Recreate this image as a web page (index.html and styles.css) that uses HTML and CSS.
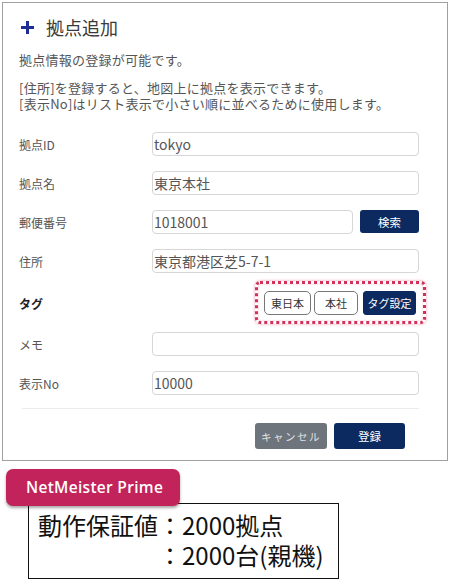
FILE: index.html
```html
<!DOCTYPE html>
<html lang="ja">
<head>
<meta charset="utf-8">
<link rel="stylesheet" href="styles.css">
</head>
<body>
<div class="panel">
  <h1 class="title">
    <svg class="plus" width="13" height="13" viewBox="0 0 13 13"><rect x="5" y="0" width="3" height="13" fill="#1f2e95"/><rect x="0" y="5" width="13" height="3" fill="#1f2e95"/></svg>
    <span>拠点追加</span>
  </h1>
  <p class="desc first">拠点情報の登録が可能です。</p>
  <div class="desc-group">
    <p class="desc">[住所]を登録すると、地図上に拠点を表示できます。</p>
    <p class="desc">[表示No]はリスト表示で小さい順に並べるために使用します。</p>
  </div>

  <div class="form">
    <div class="row">
      <div class="label">拠点ID</div>
      <div class="field"><div class="input">tokyo</div></div>
    </div>
    <div class="row">
      <div class="label">拠点名</div>
      <div class="field"><div class="input">東京本社</div></div>
    </div>
    <div class="row">
      <div class="label">郵便番号</div>
      <div class="field split"><div class="input grow">1018001</div><div class="btn navy search">検索</div></div>
    </div>
    <div class="row">
      <div class="label">住所</div>
      <div class="field"><div class="input">東京都港区芝5-7-1</div></div>
    </div>
    <div class="row tag-row">
      <div class="label strong">タグ</div>
      <div class="field tags-wrap">
        <div class="tags">
          <div class="tag">東日本</div>
          <div class="tag">本社</div>
          <div class="tag set">タグ設定</div>
        </div>
      </div>
    </div>
    <div class="row">
      <div class="label">メモ</div>
      <div class="field"><div class="input"></div></div>
    </div>
    <div class="row">
      <div class="label">表示No</div>
      <div class="field"><div class="input">10000</div></div>
    </div>
  </div>
  <div class="sep"></div>
  <div class="actions">
    <div class="btn cancel">キャンセル</div>
    <div class="btn navy submit">登録</div>
  </div>
</div>

<div class="note">
  <div class="badge">NetMeister Prime</div>
  <div class="box">
    <div class="box-k">動作保証値</div>
    <div class="box-v">
      <div class="box-line">：2000拠点</div>
      <div class="box-line">：2000台(親機)</div>
    </div>
  </div>
</div>
</body>
</html>
```

FILE: styles.css
```css
* { box-sizing: border-box; }
html, body { margin: 0; padding: 0; background: #fff; }
body {
  width: 450px;
  height: 585px;
  overflow: hidden;
  font-family: "Noto Sans CJK JP", "Noto Sans", sans-serif;
  color: #444;
}
.panel {
  margin: 2px 0 0 2px;
  width: 446px;
  height: 459px;
  border: 1px solid #a0a0a0;
  padding: 11px 28px 0 16px;
}
.title {
  margin: 0;
  display: flex;
  align-items: center;
  font-size: 18px;
  font-weight: 400;
  line-height: 26px;
  color: #3a3a3a;
}
.plus { margin: 0 12px 0 2px; }
.desc {
  margin: 0;
  height: 16px;
  font-size: 13px;
  line-height: 16px;
  letter-spacing: 0.25px;
  color: #555;
  white-space: nowrap;
}
.desc.first { margin-top: 12px; margin-bottom: 12px; }
.desc-group { display: flex; flex-direction: column; }
.form {
  margin-top: 20px;
  display: flex;
  flex-direction: column;
  gap: 15px;
}
.row {
  display: flex;
  align-items: center;
  height: 24px;
}
.tag-row { margin: 3px 0 2px; }
.label {
  width: 133px;
  flex: none;
  font-size: 12px;
  color: #555;
}
.label.strong { color: #222; font-weight: 700; }
.field { flex: 1; display: flex; }
.split { gap: 7px; }
.input {
  flex: 1;
  height: 24px;
  border: 1px solid #d6d6d6;
  border-radius: 4px;
  font-size: 14px;
  line-height: 22px;
  padding: 0 1px;
  color: #555;
  background: #fff;
}
.btn {
  display: flex;
  align-items: center;
  justify-content: center;
  border-radius: 3px;
  color: #fff;
  font-size: 11px;
}
.navy { background: #0c2a5f; }
.search { width: 59px; height: 23px; font-size: 11.5px; }
.tags-wrap { justify-content: flex-end; padding-right: 3px; }
.tags {
  position: relative;
  display: flex;
  gap: 3px;
}
.tags::after {
  content: "";
  position: absolute;
  left: -9px;
  right: -10px;
  top: -10px;
  bottom: -9px;
  border: 3px dotted #d2315a;
  border-radius: 5px;
  box-shadow: 0 0 3px rgba(220, 70, 100, 0.55), inset 0 0 2px rgba(220, 70, 100, 0.4);
  pointer-events: none;
}
.tag {
  height: 24px;
  padding: 0 6px;
  display: flex;
  align-items: center;
  justify-content: center;
  border: 1px solid #777;
  border-radius: 5px;
  font-size: 11px;
  color: #333;
  background: #fff;
}
.tag:nth-child(2) { width: 44px; }
.tag.set {
  margin-left: 2px;
  background: #0c2a5f;
  border-color: #0c2a5f;
  color: #fff;
  width: 53px;
  padding: 0;
  border-radius: 3px;
}
.sep {
  margin-top: 13px;
  height: 1px;
  background: #ececec;
  margin-left: 3px;
}
.actions {
  margin-top: 14px;
  display: flex;
  justify-content: flex-end;
  gap: 7px;
  padding-right: 14px;
}
.cancel {
  width: 72px;
  height: 26px;
  background: #6d747b;
  color: #dfe2e5;
  letter-spacing: 1.5px;
  font-size: 10.5px;
}
.submit {
  width: 71px;
  height: 26px;
  font-size: 11.5px;
}
.note {
  padding: 8px 0 0 6px;
}
.badge {
  position: relative;
  z-index: 1;
  width: 174px;
  height: 37px;
  background: #c2235a;
  border-radius: 7px;
  box-shadow: 0 2px 3px rgba(0, 0, 0, 0.35);
  color: #fff;
  font-family: "Open Sans", "Noto Sans", sans-serif;
  font-weight: 600;
  font-size: 15.5px;
  letter-spacing: 0.3px;
  line-height: 37px;
  padding-left: 20px;
}
.box {
  margin: -3px 0 0 22px;
  width: 311px;
  height: 76px;
  border: 1px solid #111;
  display: flex;
  padding: 6px 0 0 9px;
  font-size: 24px;
  line-height: 30px;
  color: #111;
}
.box-v { display: flex; flex-direction: column; }
.box-line { height: 30px; white-space: nowrap; }
```
